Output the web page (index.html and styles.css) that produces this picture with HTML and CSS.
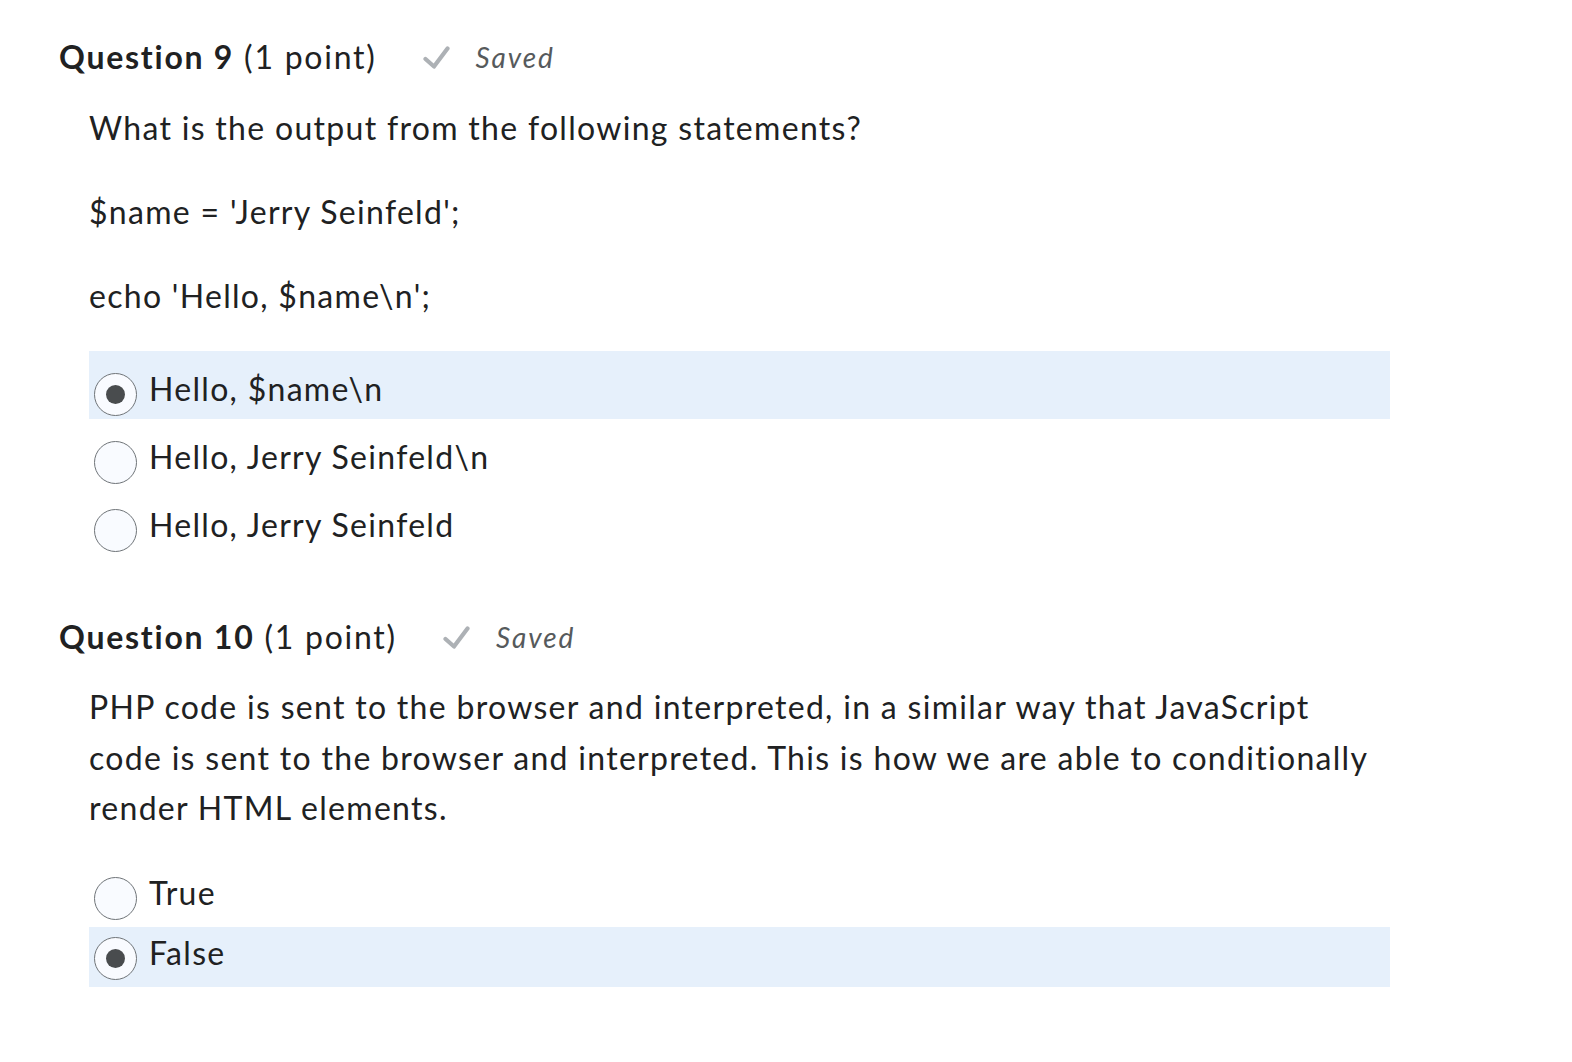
FILE: index.html
```html
<!DOCTYPE html>
<html>
<head>
<meta charset="utf-8">
<link rel="stylesheet" href="styles.css">
</head>
<body>
<div class="page">
  <section class="question q9">
    <h2 class="q-head">
      <span class="q-title"><strong>Question 9</strong> (1 point)</span>
      <span class="saved">
        <svg class="check" viewBox="0 0 27 23" width="27" height="23"><path d="M2.5 13 L11 20.5 L24.5 2.5" fill="none" stroke="#adb1b5" stroke-width="4.2" stroke-linecap="round" stroke-linejoin="round"/></svg>
        <em>Saved</em>
      </span>
    </h2>
    <div class="q-body">
      <p class="q-text">What is the output from the following statements?</p>
      <p class="q-text">$name = 'Jerry Seinfeld';</p>
      <p class="q-text">echo 'Hello, $name\n';</p>
      <div class="options tall">
        <div class="option selected"><span class="radio checked"></span><span class="opt-label">Hello, $name\n</span></div>
        <div class="option"><span class="radio"></span><span class="opt-label">Hello, Jerry Seinfeld\n</span></div>
        <div class="option"><span class="radio"></span><span class="opt-label">Hello, Jerry Seinfeld</span></div>
      </div>
    </div>
  </section>
  <section class="question q10">
    <h2 class="q-head">
      <span class="q-title"><strong>Question 10</strong> (1 point)</span>
      <span class="saved">
        <svg class="check" viewBox="0 0 27 23" width="27" height="23"><path d="M2.5 13 L11 20.5 L24.5 2.5" fill="none" stroke="#adb1b5" stroke-width="4.2" stroke-linecap="round" stroke-linejoin="round"/></svg>
        <em>Saved</em>
      </span>
    </h2>
    <div class="q-body">
      <p class="q-para">PHP code is sent to the browser and interpreted, in a similar way that JavaScript code is sent to the browser and interpreted. This is how we are able to conditionally render HTML elements.</p>
      <div class="options short">
        <div class="option"><span class="radio"></span><span class="opt-label">True</span></div>
        <div class="option selected"><span class="radio checked"></span><span class="opt-label">False</span></div>
      </div>
    </div>
  </section>
</div>
</body>
</html>
```
FILE: styles.css
```css
html, body {
  margin: 0;
  padding: 0;
  background: #ffffff;
}
body {
  font-family: Lato, "Open Sans", sans-serif;
  color: #202122;
  font-variant-ligatures: none;
}
.page {
  padding: 33px 0 0 59px;
}
.q-head {
  margin: 0;
  display: flex;
  align-items: center;
  height: 48px;
  font-size: 32px;
  font-weight: 400;
  line-height: 48px;
  letter-spacing: 1.75px;
}
.q-title strong {
  font-weight: 700;
}
.saved {
  display: flex;
  align-items: center;
  margin-left: 46px;
  color: #565a5c;
  font-size: 28px;
  letter-spacing: 1.9px;
}
.saved .check {
  margin-right: 26px;
}
.saved em {
  font-style: italic;
}
.q-body {
  padding-left: 30px;
  width: 1301px;
}
.q-text {
  margin: 0;
  font-size: 32px;
  line-height: 50px;
  letter-spacing: 1.3px;
}
.q9 .q-head + .q-body .q-text:first-child {
  margin-top: 22px;
}
.q-text + .q-text {
  margin-top: 34px;
}
.q-para {
  margin: 21px 0 0;
  font-size: 32px;
  line-height: 50.5px;
  letter-spacing: 1.3px;
}
.options {
  display: flex;
  flex-direction: column;
}
.options.tall {
  margin-top: 30px;
}
.options.short {
  margin-top: 33px;
}
.option {
  display: flex;
  align-items: flex-start;
  box-sizing: border-box;
  font-size: 32px;
  letter-spacing: 1.3px;
}
.options.tall .option {
  height: 68px;
  padding-top: 22px;
}
.options.short .option {
  height: 60px;
  padding-top: 10px;
}
.option.selected {
  background: #e6f0fb;
}
.radio {
  box-sizing: border-box;
  width: 43px;
  height: 43px;
  margin-left: 5px;
  margin-right: 12px;
  border: 1.5px solid #6f7478;
  border-radius: 50%;
  background: #f9fbff;
  display: flex;
  align-items: center;
  justify-content: center;
  flex: none;
}
.radio.checked::after {
  content: "";
  width: 19px;
  height: 19px;
  border-radius: 50%;
  background: #494c4e;
}
.opt-label {
  line-height: 32px;
}
.q10 {
  margin-top: 58px;
}
```
